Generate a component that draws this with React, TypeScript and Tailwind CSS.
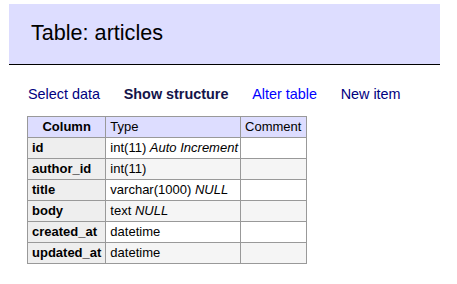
import React from 'react';

type Row = { name: string; type: string; extra?: string };

const rows: Row[] = [
  { name: 'id', type: 'int(11)', extra: 'Auto Increment' },
  { name: 'author_id', type: 'int(11)' },
  { name: 'title', type: 'varchar(1000)', extra: 'NULL' },
  { name: 'body', type: 'text', extra: 'NULL' },
  { name: 'created_at', type: 'datetime' },
  { name: 'updated_at', type: 'datetime' },
];

export default function App() {
  return (
    <div className="min-h-[284px] bg-white pt-[4px] text-black" style={{ fontFamily: '"Liberation Sans", Arial, sans-serif' }}>
      {/* Title bar */}
      <div className="ml-[9px] w-[431px] h-[61px] bg-[#ddf] border-b border-black pl-[22px] pt-[17px]">
        <h2 className="text-[21.6px] leading-[24px] font-normal">Table: articles</h2>
      </div>

      {/* Links */}
      <div className="flex pl-[28px] pt-[21px] text-[14.4px] leading-[17px] gap-[23.7px]">
        <a href="#" className="text-[#000080]">Select data</a>
        <b className="text-[#14144a]">Show structure</b>
        <a href="#" className="text-[#0000ff]">Alter table</a>
        <a href="#" className="text-[#000080]">New item</a>
      </div>

      {/* Structure table */}
      <table className="ml-[27px] mt-[13px] border-collapse text-[13px] leading-[16px]">
        <thead>
          <tr className="bg-[#ddf]">
            <th className="border border-[#999] h-[21px] w-[78px] px-[4px] text-center font-bold">Column</th>
            <td className="border border-[#999] h-[21px] w-[134px] pl-[4px] pr-[2px]">Type</td>
            <td className="border border-[#999] h-[21px] w-[66px] pl-[4px] pr-[3px]">Comment</td>
          </tr>
        </thead>
        <tbody>
          {rows.map((r, i) => (
            <tr key={r.name} className={i % 2 === 1 ? 'bg-[#f5f5f5]' : 'bg-white'}>
              <th className="border border-[#999] h-[21px] px-[4px] text-left font-bold bg-[#eee] whitespace-nowrap">{r.name}</th>
              <td className="border border-[#999] h-[21px] pl-[4px] pr-[2px] whitespace-nowrap">
                {r.type}
                {r.extra && <> <i>{r.extra}</i></>}
              </td>
              <td className="border border-[#999] h-[21px] pl-[4px] pr-[3px]"></td>
            </tr>
          ))}
        </tbody>
      </table>
    </div>
  );
}
